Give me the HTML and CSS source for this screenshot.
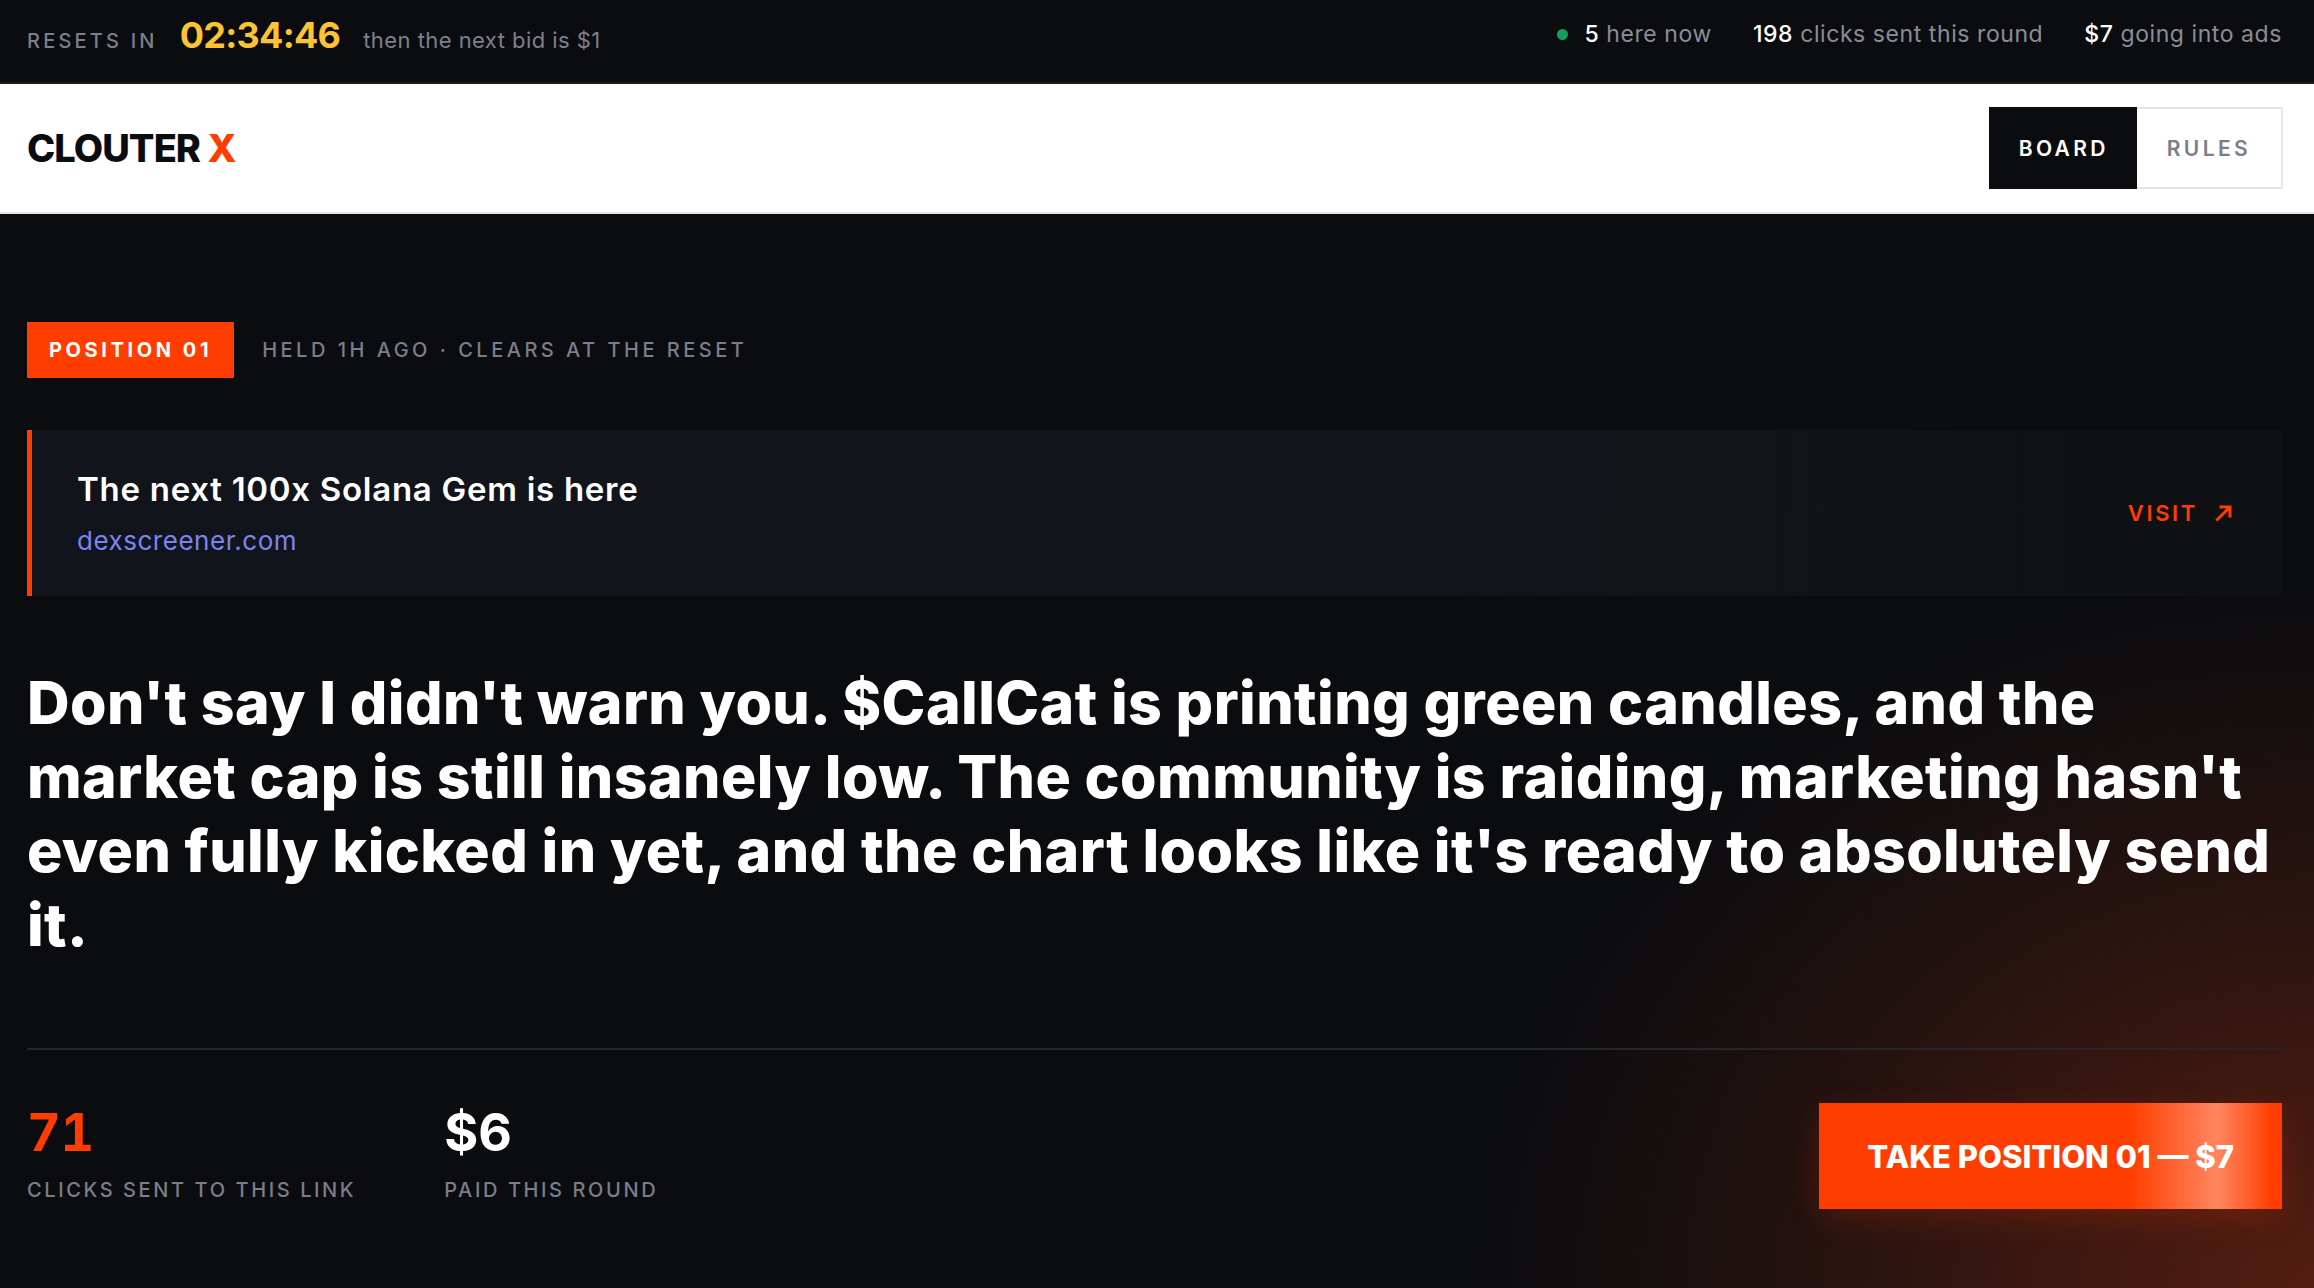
FILE: index.html
```html
<!DOCTYPE html>
<html lang="en">
<head>
<meta charset="utf-8">
<title>Clouter X</title>
<link rel="stylesheet" href="styles.css">
</head>
<body>
<div class="topbar">
  <div class="tb-left">
    <span class="tb-label">RESETS IN</span>
    <span class="tb-timer">02:34:46</span>
    <span class="tb-next">then the next bid is $1</span>
  </div>
  <div class="tb-right">
    <span class="tb-item"><span class="dot"></span><b>5</b> here now</span>
    <span class="tb-item"><b>198</b> clicks sent this round</span>
    <span class="tb-item"><b>$7</b> going into ads</span>
  </div>
</div>
<header class="header">
  <div class="logo">CLOUTER <span class="logo-x">X</span></div>
  <nav class="nav">
    <a class="nav-btn active">BOARD</a>
    <a class="nav-btn">RULES</a>
  </nav>
</header>
<main class="main">
  <div class="pos-row">
    <span class="badge">POSITION 01</span>
    <span class="meta">HELD 1H AGO · CLEARS AT THE RESET</span>
  </div>
  <div class="card">
    <div class="card-text">
      <div class="card-title">The next 100x Solana Gem is here</div>
      <div class="card-link">dexscreener.com</div>
    </div>
    <a class="visit">VISIT <svg class="arrow" width="18" height="18" viewBox="0 0 18 18"><path d="M2.5 15.5 L14.5 3.5 M6 3 H15 V12" fill="none" stroke="#ff3d00" stroke-width="3" stroke-linecap="square"/></svg></a>
  </div>
  <h1 class="headline">Don't say I didn't warn you. $CallCat is printing green candles, and the market cap is still insanely low. The community is raiding, marketing hasn't even fully kicked in yet, and the chart looks like it's ready to absolutely send it.</h1>
  <div class="divider"></div>
  <div class="bottom-row">
    <div class="stats">
      <div class="stat">
        <div class="stat-num orange">71</div>
        <div class="stat-label">CLICKS SENT TO THIS LINK</div>
      </div>
      <div class="stat">
        <div class="stat-num">$6</div>
        <div class="stat-label">PAID THIS ROUND</div>
      </div>
    </div>
    <a class="cta">TAKE POSITION 01 — $7</a>
  </div>
</main>
</body>
</html>
```
FILE: styles.css
```css
* { box-sizing: border-box; }
html, body { margin: 0; padding: 0; }
body {
  font-family: "Inter", "Noto Sans", sans-serif;
  background: #0b0c0f;
  color: #fff;
  min-height: 1288px;
}
a { text-decoration: none; }

.topbar {
  height: 84px;
  background: #0b0c0f;
  border-bottom: 2px solid #1b1c20;
  display: flex;
  justify-content: space-between;
  align-items: flex-start;
  padding: 0 32px 0 27px;
}
.tb-left {
  display: flex;
  align-items: baseline;
  margin-top: 17px;
  line-height: 1;
}
.tb-label {
  font-size: 20px;
  letter-spacing: 0.16em;
  color: #7b7f8b;
  font-weight: 500;
  margin-right: 22px;
}
.tb-timer {
  font-size: 36px;
  font-weight: 700;
  letter-spacing: -0.02em;
  color: #fcc332;
  margin-right: 23px;
}
.tb-next {
  font-size: 22px;
  letter-spacing: 0.02em;
  color: #7d808c;
}
.tb-right {
  display: flex;
  align-items: baseline;
  gap: 41px;
  margin-top: 23px;
  font-size: 23px;
  letter-spacing: 0.025em;
  line-height: 1;
  color: #8a8d98;
}
.tb-item b { color: #fff; font-weight: 500; }
.dot {
  display: inline-block;
  width: 11px;
  height: 11px;
  border-radius: 50%;
  background: #14a05a;
  margin-right: 16px;
  vertical-align: 2px;
}

.header {
  height: 130px;
  background: #fff;
  border-bottom: 2px solid #e4e5e9;
  display: flex;
  justify-content: space-between;
  align-items: center;
  padding: 0 31px 0 27px;
}
.logo {
  font-size: 38px;
  font-weight: 800;
  letter-spacing: -0.025em;
  color: #0b0c0f;
}
.logo-x { color: #ff3d00; }
.nav {
  display: flex;
  border: 2px solid #e4e5e9;
  height: 82px;
}
.nav-btn {
  display: flex;
  align-items: center;
  padding: 0 30px 0 30px;
  font-size: 21px;
  font-weight: 600;
  letter-spacing: 0.16em;
  color: #7b7e8a;
  background: #fff;
}
.nav-btn.active {
  background: #0b0c0f;
  color: #fff;
  margin: -2px 0 -2px -2px;
  padding: 0 28px 0 30px;
}

.main {
  padding: 108px 32px 0 27px;
  min-height: 1074px;
  background:
    radial-gradient(ellipse 1050px 880px at 100% 100%, rgba(255, 70, 20, 0.30), rgba(255, 70, 20, 0.08) 55%, rgba(255, 70, 20, 0) 80%),
    #0b0c0f;
}
.pos-row {
  display: flex;
  align-items: center;
  gap: 28px;
}
.badge {
  display: flex;
  align-items: center;
  height: 56px;
  padding: 0 22px 0 22px;
  background: #ff3d00;
  color: #fff;
  font-size: 20px;
  font-weight: 700;
  letter-spacing: 0.18em;
}
.meta {
  font-size: 20px;
  font-weight: 500;
  letter-spacing: 0.175em;
  color: #7b7e8a;
}

.card {
  margin-top: 52px;
  height: 166px;
  border-left: 5px solid #ff3d00;
  background: linear-gradient(90deg, #12141c 0%, #13151d 40%, #111317 75%, #0f1014 100%);
  display: flex;
  justify-content: space-between;
  align-items: center;
  padding: 0 49px 0 45px;
}
.card-title {
  font-size: 33px;
  font-weight: 600;
  line-height: 40px;
  letter-spacing: 0.022em;
  color: #fff;
}
.card-link {
  margin-top: 15px;
  font-size: 26px;
  line-height: 34px;
  letter-spacing: 0.02em;
  color: #7c84f0;
}
.visit {
  display: flex;
  align-items: center;
  gap: 17px;
  font-size: 22px;
  font-weight: 600;
  letter-spacing: 0.12em;
  color: #ff3d00;
}
.arrow { display: block; }

.headline {
  margin: 70px -20px 0 0;
  font-size: 59px;
  line-height: 74px;
  font-weight: 800;
  letter-spacing: 0.007em;
  color: #fff;
}
.divider {
  margin-top: 86px;
  height: 2px;
  background: #25262b;
}
.bottom-row {
  display: flex;
  justify-content: space-between;
  align-items: center;
  padding-top: 53px;
}
.stats {
  display: flex;
  gap: 88px;
  margin-top: -6px;
}
.stat-num {
  font-size: 52px;
  font-weight: 700;
  line-height: 1;
  color: #fff;
  font-variant-numeric: tabular-nums;
}
.stat-num.orange { color: #ff3d00; }
.stat-label {
  margin-top: 21px;
  font-size: 20px;
  line-height: 1;
  font-weight: 500;
  letter-spacing: 0.13em;
  color: #7b7e8a;
}
.cta {
  display: flex;
  align-items: center;
  height: 106px;
  padding: 0 48px;
  font-size: 31px;
  font-weight: 800;
  letter-spacing: 0;
  color: #fff;
  background:
    linear-gradient(90deg, rgba(255,255,255,0) 67%, rgba(255,255,255,0.38) 86%, rgba(255,255,255,0) 98%),
    #ff3d00;
  box-shadow: 0 10px 30px rgba(255, 61, 0, 0.18);
}
```
